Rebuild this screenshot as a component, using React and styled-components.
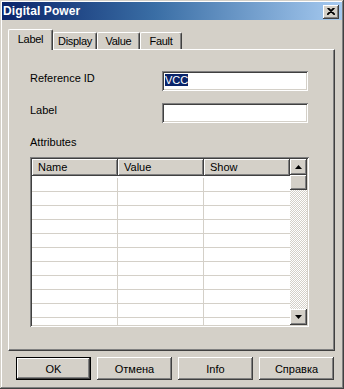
import React from "react";
import styled, { createGlobalStyle } from "styled-components";

const GlobalStyle = createGlobalStyle`
  html, body {
    margin: 0;
    padding: 0;
    background: #d4d0c8;
  }
  * {
    box-sizing: border-box;
  }
`;

const Window = styled.div`
  width: 344px;
  height: 389px;
  padding: 2px;
  display: flex;
  flex-direction: column;
  background: #d4d0c8;
  font-family: "Liberation Sans", Arial, sans-serif;
  font-size: 11px;
  color: #000;
  box-shadow: inset -1px -1px #404040, inset 1px 1px #d4d0c8,
    inset -2px -2px #808080, inset 2px 2px #fff;
`;

const TitleBar = styled.div`
  height: 18px;
  flex: none;
  display: flex;
  align-items: center;
  justify-content: space-between;
  padding: 0 3px 0 1px;
  background: linear-gradient(90deg, #0a246a 0%, #3a6ea5 45%, #a6caf0 100%);
`;

const TitleText = styled.span`
  color: #fff;
  font-weight: bold;
  font-size: 12px;
  letter-spacing: 0.1px;
`;

const CloseButton = styled.div`
  width: 16px;
  height: 14px;
  margin-top: 1px;
  display: flex;
  align-items: center;
  justify-content: center;
  background: #d4d0c8;
  box-shadow: inset -1px -1px #404040, inset 1px 1px #fff,
    inset -2px -2px #808080;
`;

const Body = styled.div`
  flex: 1;
  display: flex;
  flex-direction: column;
  padding: 9px 7px 0 6px;
`;

const TabRow = styled.div`
  height: 20px;
  display: flex;
  align-items: flex-end;
  position: relative;
  z-index: 1;
`;

const Tab = styled.div`
  width: ${({ $w }) => $w}px;
  height: ${({ $active }) => ($active ? 21 : 17)}px;
  margin-bottom: ${({ $active }) => ($active ? -1 : 0)}px;
  padding-top: ${({ $active }) => ($active ? 3 : 2)}px;
  display: flex;
  justify-content: center;
  white-space: nowrap;
  letter-spacing: -0.3px;
  background: #d4d0c8;
  border-top: 1px solid #fff;
  border-left: 1px solid #fff;
  border-right: 1px solid #404040;
  border-radius: 2px 2px 0 0;
  box-shadow: inset -1px 0 #808080;
  line-height: 13px;
`;

const Panel = styled.div`
  flex: 1;
  display: flex;
  flex-direction: column;
  padding: 21px 25px 0 21px;
  border-top: 1px solid #fff;
  border-left: 1px solid #fff;
  border-right: 1px solid #404040;
  border-bottom: 1px solid #404040;
  box-shadow: inset -1px -1px #808080;
`;

const Form = styled.div`
  display: grid;
  grid-template-columns: 132px 146px;
  row-gap: 12px;
`;

const FieldLabel = styled.label`
  padding-top: 1px;
  line-height: 13px;
`;

const Input = styled.div`
  height: 20px;
  background: #fff;
  padding: 3px 2px 0 3px;
  line-height: 13px;
  box-shadow: inset 1px 1px #808080, inset -1px -1px #fff,
    inset 2px 2px #404040, inset -2px -2px #d4d0c8;
`;

const Selected = styled.span`
  background: #0a246a;
  color: #fff;
`;

const SectionTitle = styled.div`
  margin-top: 13px;
  line-height: 13px;
`;

const Table = styled.div`
  margin-top: 8px;
  width: 279px;
  height: 170px;
  padding: 2px;
  display: flex;
  background: #fff;
  box-shadow: inset 1px 1px #808080, inset -1px -1px #fff,
    inset 2px 2px #404040, inset -2px -2px #d4d0c8;
`;

const Grid = styled.div`
  width: 258px;
  display: flex;
  flex-direction: column;
  overflow: hidden;
`;

const HeaderRow = styled.div`
  display: flex;
  height: 17px;
  flex: none;
  margin-bottom: 2px;
`;

const HeaderCell = styled.div`
  width: 86px;
  padding: 2px 0 0 6px;
  background: #d4d0c8;
  line-height: 13px;
  box-shadow: inset -1px -1px #404040, inset 1px 1px #fff,
    inset -2px -2px #808080;
`;

const Row = styled.div`
  display: flex;
  height: 14px;
  flex: none;
  border-bottom: 1px solid #d4d0c8;
`;

const Cell = styled.div`
  width: 86px;
  border-right: ${({ $last }) => ($last ? "none" : "1px solid #d4d0c8")};
`;

const ScrollBar = styled.div`
  width: 17px;
  display: flex;
  flex-direction: column;
`;

const ScrollButton = styled.div`
  height: ${({ $h }) => $h}px;
  flex: none;
  display: flex;
  align-items: center;
  justify-content: center;
  background: #d4d0c8;
  box-shadow: inset -1px -1px #404040, inset 1px 1px #fff,
    inset -2px -2px #808080;
`;

const Track = styled.div`
  flex: 1;
  background: repeating-conic-gradient(#d4d0c8 0 25%, #fff 0 50%) 0 0 / 2px
    2px;
`;

const ButtonRow = styled.div`
  display: flex;
  gap: 6px;
  padding: 0 1px 0 8px;
  margin: 6px 0 7px;
`;

const Button = styled.div`
  width: 75px;
  height: 23px;
  display: flex;
  align-items: center;
  justify-content: center;
  background: #d4d0c8;
  border: ${({ $default }) => ($default ? "1px solid #000" : "none")};
  box-shadow: inset -1px -1px #404040, inset 1px 1px #fff,
    inset -2px -2px #808080;
`;

const Arrow = ({ up }) => (
  <svg width="7" height="4" viewBox="0 0 7 4">
    <path d={up ? "M3.5 0 L7 4 L0 4 Z" : "M0 0 L7 0 L3.5 4 Z"} fill="#000" />
  </svg>
);

const columns = ["Name", "Value", "Show"];
const rows = Array.from({ length: 11 });

export default function App() {
  return (
    <>
      <GlobalStyle />
      <Window>
        <TitleBar>
          <TitleText>Digital Power</TitleText>
          <CloseButton>
            <svg width="8" height="7" viewBox="0 0 8 7">
              <path
                d="M0.5 0 L7.5 7 M1.5 0 L8 6.5 M7.5 0 L0.5 7 M6.5 0 L0 6.5"
                stroke="#000"
                strokeWidth="1.1"
              />
            </svg>
          </CloseButton>
        </TitleBar>
        <Body>
          <TabRow>
            <Tab $active $w={45}>Label</Tab>
            <Tab $w={44}>Display</Tab>
            <Tab $w={43}>Value</Tab>
            <Tab $w={42}>Fault</Tab>
          </TabRow>
          <Panel>
            <Form>
              <FieldLabel>Reference ID</FieldLabel>
              <Input>
                <Selected>VCC</Selected>
              </Input>
              <FieldLabel>Label</FieldLabel>
              <Input />
            </Form>
            <SectionTitle>Attributes</SectionTitle>
            <Table>
              <Grid>
                <HeaderRow>
                  {columns.map((c) => (
                    <HeaderCell key={c}>{c}</HeaderCell>
                  ))}
                </HeaderRow>
                {rows.map((_, i) => (
                  <Row key={i}>
                    <Cell />
                    <Cell />
                    <Cell $last />
                  </Row>
                ))}
              </Grid>
              <ScrollBar>
                <ScrollButton $h={16}>
                  <Arrow up />
                </ScrollButton>
                <ScrollButton $h={15} />
                <Track />
                <ScrollButton $h={16}>
                  <Arrow />
                </ScrollButton>
              </ScrollBar>
            </Table>
          </Panel>
          <ButtonRow>
            <Button $default>OK</Button>
            <Button>Отмена</Button>
            <Button>Info</Button>
            <Button>Справка</Button>
          </ButtonRow>
        </Body>
      </Window>
    </>
  );
}
